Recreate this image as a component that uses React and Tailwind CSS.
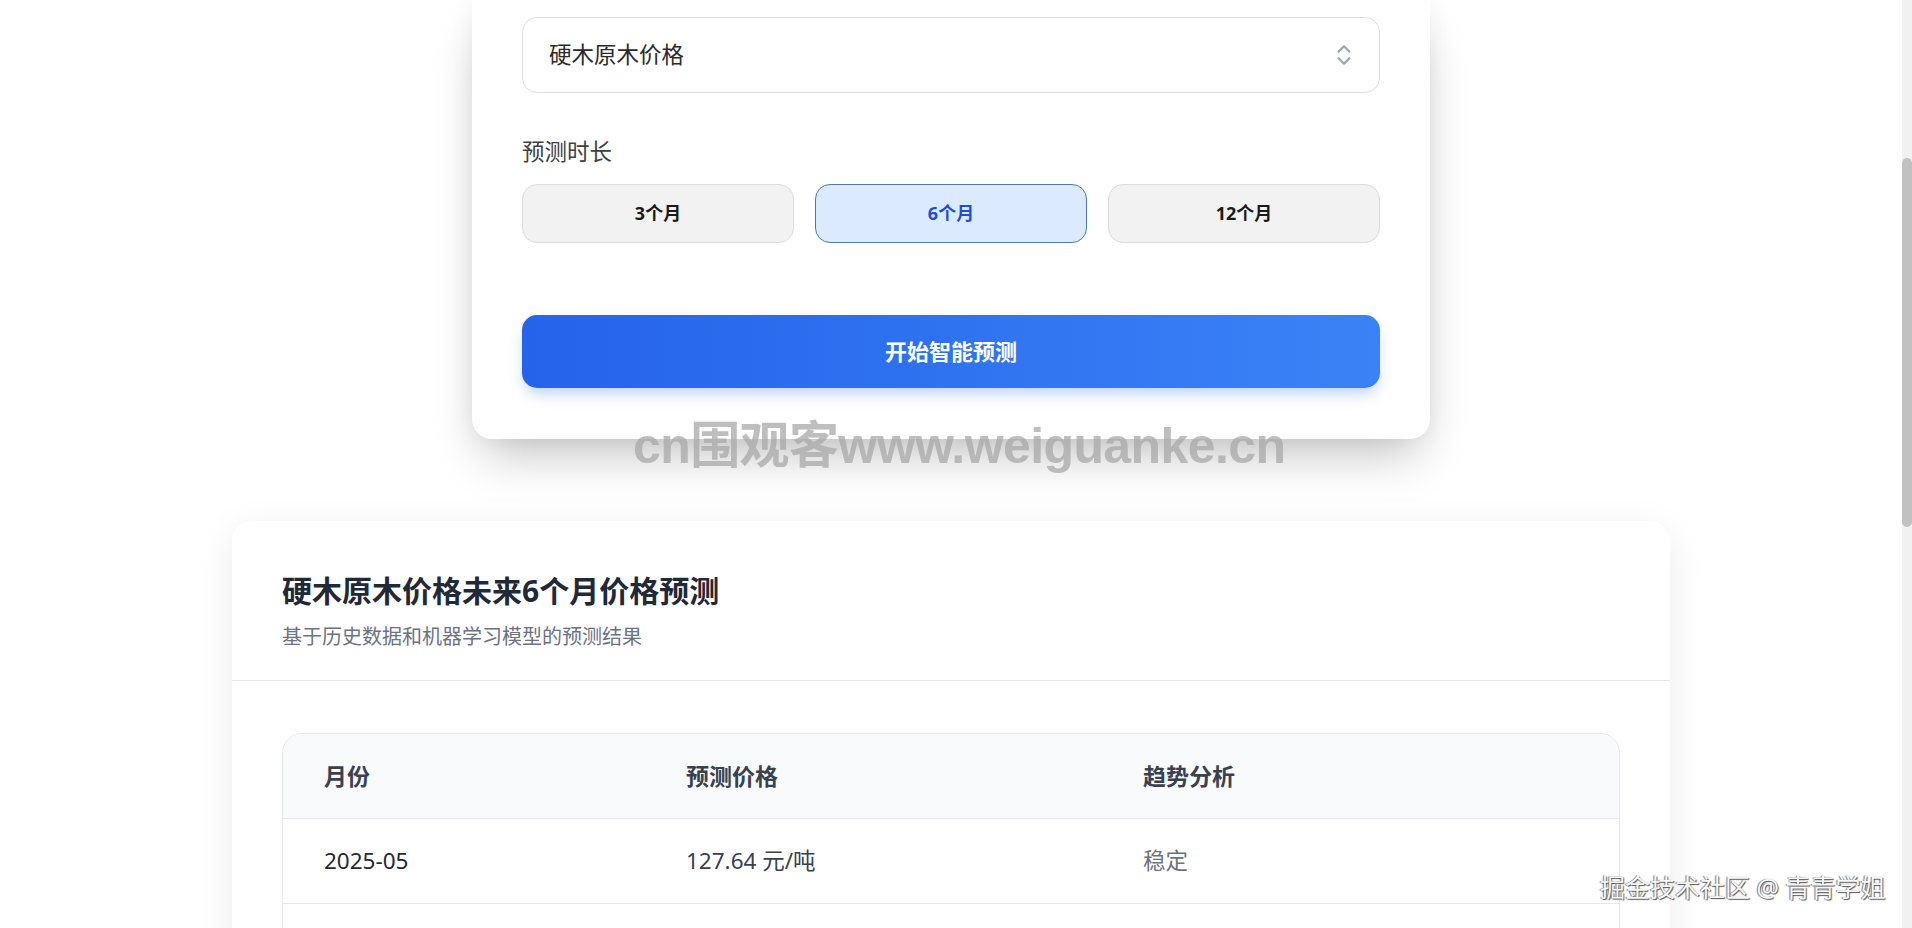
import { useState } from "react";
import { ChevronsUpDown } from "lucide-react";

const periods = ["3个月", "6个月", "12个月"];

const rows = [{ month: "2025-05", price: "127.64 元/吨", trend: "稳定" }];

export default function App() {
  const [period, setPeriod] = useState("6个月");

  return (
    <div className="relative flex h-[928px] w-full overflow-hidden bg-white font-['Noto_Sans','Noto_Sans_CJK_SC',sans-serif]">
      <main className="flex flex-1 flex-col items-center">
        {/* form card, scrolled partly out of view */}
        <section className="w-[958px] rounded-b-[20px] bg-white px-[50px] pt-[17px] pb-[51px] shadow-[0_25px_50px_-12px_rgba(0,0,0,0.25),0_0_24px_rgba(0,0,0,0.05)]">
          <button className="flex h-[76px] w-full items-center justify-between rounded-[15px] border border-[#dcdee2] bg-white pl-[26px] pr-[22px] text-left">
            <span className="text-[22.5px] text-[#2b2b2b]">硬木原木价格</span>
            <ChevronsUpDown className="h-[26px] w-[26px] text-[#9ca3af]" strokeWidth={2} />
          </button>

          <div className="mt-[44px] text-[22.5px] leading-[30px] text-[#404040]">预测时长</div>

          <div className="mt-[17px] grid grid-cols-3 gap-[21px]">
            {periods.map((p) => (
              <button
                key={p}
                onClick={() => setPeriod(p)}
                className={
                  p === period
                    ? "h-[59px] rounded-[15px] border border-[#4a78b5] bg-[#dbeafe] text-[18px] font-bold text-[#1d4ed8]"
                    : "h-[59px] rounded-[15px] border border-[#dcdcdc] bg-[#f2f2f2] text-[18px] font-bold text-[#1a1a1a]"
                }
              >
                {p}
              </button>
            ))}
          </div>

          <button className="mt-[72px] h-[73px] w-full rounded-[15px] bg-gradient-to-r from-[#2563eb] to-[#3b82f6] text-[22px] font-bold text-white shadow-[0_8px_16px_-4px_rgba(37,99,235,0.35)]">
            开始智能预测
          </button>
        </section>

        {/* result card */}
        <section className="mt-[82px] w-[1438px] rounded-[20px] bg-white shadow-[0_10px_40px_rgba(0,0,0,0.08)]">
          <div className="border-b border-[#e5e7eb] px-[50px] pt-[50px] pb-[28px]">
            <h2 className="text-[30px] font-bold leading-[40px] text-[#1f2937]">硬木原木价格未来6个月价格预测</h2>
            <p className="mt-[11px] text-[20px] leading-[30px] text-[#6b7280]">基于历史数据和机器学习模型的预测结果</p>
          </div>

          <div className="px-[50px] pt-[52px] pb-[50px]">
            <div className="overflow-hidden rounded-[20px] border border-[#e5e7eb]">
              <div className="grid h-[85px] grid-cols-[361px_457px_1fr] items-center border-b border-[#e5e7eb] bg-[#f9fafb] text-[23px] font-bold text-[#374151]">
                <div className="pl-[41px]">月份</div>
                <div className="pl-[42px]">预测价格</div>
                <div className="pl-[42px]">趋势分析</div>
              </div>
              {rows.map((r) => (
                <div
                  key={r.month}
                  className="grid h-[85px] grid-cols-[361px_457px_1fr] items-center border-b border-[#e5e7eb] text-[22.5px]"
                >
                  <div className="pl-[41px] text-[#1f2937]">{r.month}</div>
                  <div className="pl-[42px] text-[#374151]">{r.price}</div>
                  <div className="pl-[42px] text-[#6b7280]">{r.trend}</div>
                </div>
              ))}
              <div className="h-[170px]" />
            </div>
          </div>
        </section>
      </main>

      {/* scrollbar */}
      <div className="flex w-[10px] flex-col bg-[#f1f1f1] pt-[158px]">
        <div className="h-[369px] rounded-full bg-[#c1c1c1]" />
      </div>

      {/* watermarks */}
      <div className="pointer-events-none absolute left-[633px] top-[421px] whitespace-nowrap font-['Liberation_Sans','Noto_Sans_CJK_SC',sans-serif] text-[50px] font-semibold leading-none tracking-[-0.6px] text-[#a8a8a8]/75">
        cn围观客www.weiguanke.cn
      </div>
      <div className="pointer-events-none absolute left-[1600px] top-[875px] whitespace-nowrap text-[25px] leading-none text-[#f7f7f7] [text-shadow:1px_1px_1px_#555,-1px_0_1px_#777]">
        掘金技术社区 @ 青青学姐
      </div>
    </div>
  );
}
